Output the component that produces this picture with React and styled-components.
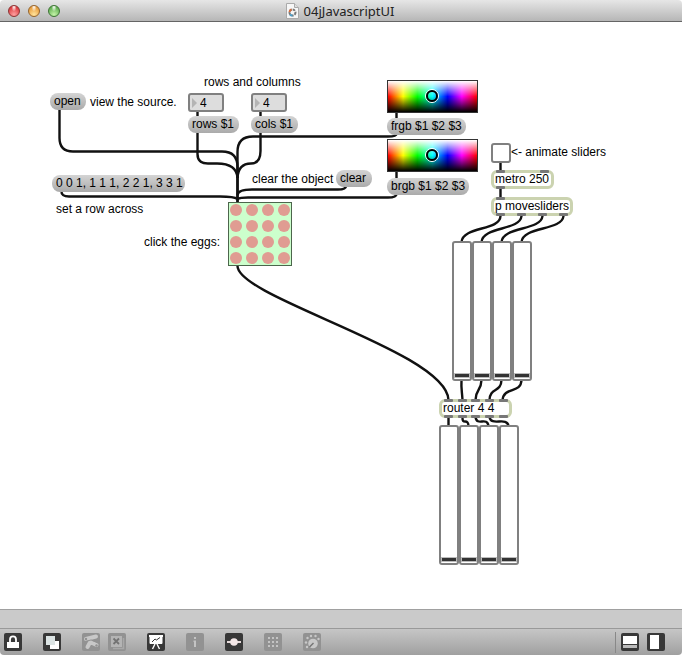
import React, { useState } from "react";
import styled, { createGlobalStyle } from "styled-components";

const Global = createGlobalStyle`
  * { box-sizing: border-box; }
  body { margin: 0; background: #fff; }
  button, input { font: inherit; color: inherit; margin: 0; }
`;

const Window = styled.div`
  display: flex;
  flex-direction: column;
  min-height: 100vh;
  font: 12px/14px "Liberation Sans", Arial, sans-serif;
  color: #000;
`;

const TitleBar = styled.header`
  position: relative;
  display: flex;
  align-items: center;
  justify-content: center;
  height: 22px;
  border-bottom: 1px solid #656565;
  border-radius: 4px 4px 0 0;
  background: linear-gradient(#e6e6e6, #b6b6b6);
`;

const Lights = styled.div`
  position: absolute;
  left: 8px;
  top: 5px;
  display: flex;
  gap: 8px;
`;

const Light = styled.button`
  width: 12px;
  height: 12px;
  padding: 0;
  border: 1px solid ${(p) => p.$edge};
  border-radius: 50%;
  background: radial-gradient(ellipse at 50% 10%, #fffc 0 8%, transparent 36%),
    radial-gradient(circle at 50% 85%, ${(p) => p.$glow}, ${(p) => p.$tone} 75%);
`;

const Title = styled.h1`
  display: flex;
  align-items: center;
  gap: 5px;
  margin: 0;
  padding-right: 2px;
  font: 13px/20px "Noto Sans", sans-serif;
  color: #222;
`;

const Canvas = styled.main`
  position: relative;
  flex: 1;
  min-height: 560px;
  overflow: hidden;
  background: #fff;
`;

const Cords = styled.svg`
  position: absolute;
  left: 0;
  top: 0;
  width: 100%;
  height: 100%;
  fill: none;
  stroke: #111;
  stroke-width: 2.4;
`;

const Node = styled.div`
  position: absolute;
  left: ${(p) => p.$x}px;
  top: ${(p) => p.$y}px;
  display: flex;
  white-space: nowrap;
`;

const Message = styled.button`
  width: ${(p) => p.$w}px;
  height: 17px;
  padding: 0 0 1px 4px;
  border: 0;
  border-radius: 8px;
  text-align: left;
  white-space: nowrap;
  background: linear-gradient(#d4d4d4, #aaa);
`;

const NumberBox = styled.label`
  display: flex;
  align-items: center;
  gap: 3px;
  width: 36px;
  height: 19px;
  padding-left: 2px;
  border: 2px solid #808080;
  border-radius: 3px;
  background: #ddd;
`;

const NumberField = styled.input`
  width: 22px;
  height: 15px;
  padding: 0;
  border: 0;
  outline: 0;
  background: transparent;
`;

const Swatch = styled.button`
  display: flex;
  align-items: center;
  justify-content: center;
  width: 91px;
  height: 33px;
  padding: 0 2px 1px 0;
  border: 1px solid #333;
  background: linear-gradient(#fff, transparent 50%, #000),
    linear-gradient(90deg, #f00, #ff0 17%, #0f0 33%, #0ff 50%, #00f 67%, #f0f 83%, #f00);
`;

const Toggle = styled.input`
  appearance: none;
  width: 20px;
  height: 20px;
  border: 2px solid #808080;
  border-radius: 3px;
  background: #fff;
  &:checked { background: #ccc; }
`;

const ObjectBox = styled.div`
  position: relative;
  width: ${(p) => p.$w}px;
  height: 19px;
  padding-left: 1px;
  border: 3px solid #cbd3b0;
  border-radius: 6px;
  line-height: 13px;
  background: #fff;
`;

const Port = styled.span`
  position: absolute;
  left: ${(p) => p.$x - 3}px;
  ${(p) => (p.$out ? "bottom" : "top")}: -3px;
  width: 9px;
  height: 3px;
  border-radius: 1px;
  background: #777;
`;

const Eggs = styled.div`
  display: grid;
  grid-template-columns: repeat(4, 16px);
  grid-auto-rows: 16px;
  width: 64px;
  height: 64px;
  place-content: center;
  overflow: hidden;
  outline: 1px solid #4c664c;
  outline-offset: -1px;
  background: #cfc;
`;

const Egg = styled.button`
  place-self: center;
  width: 12px;
  height: 12px;
  padding: 0;
  border: 0;
  border-radius: 50%;
  background: ${(p) => (p.$lit ? "#c66" : "#e09c92")};
`;

const Slider = styled.input`
  appearance: none;
  writing-mode: vertical-lr;
  direction: rtl;
  width: 20px;
  height: 140px;
  padding: 2px 1px;
  border: 2px solid #808080;
  border-radius: 3px;
  background: #fff;
  &::-webkit-slider-thumb {
    appearance: none;
    width: 14px;
    height: 3px;
    background: #333;
    box-shadow: 0 0 0 1px #bbb;
  }
`;

const StatusBar = styled.div`
  height: 19px;
  border-top: 1px solid #a0a0a0;
  background: #cacaca;
`;

const ToolBar = styled.footer`
  display: flex;
  align-items: center;
  height: 27px;
  padding: 0 17px 0 4px;
  border-top: 1px solid #999;
  border-radius: 0 0 4px 4px;
  background: linear-gradient(#c6c6c6, #a0a0a0);
`;

const Tools = styled.div`
  display: flex;
  gap: ${(p) => p.$gap}px;
  margin-right: ${(p) => p.$after || 0}px;
`;

const PaneTools = styled.div`
  display: flex;
  align-items: center;
  gap: 8px;
  height: 21px;
  margin-left: auto;
  padding-left: 5px;
  border-left: 1px solid #888;
`;

const Tool = styled.button`
  display: flex;
  width: 18px;
  height: 18px;
  padding: 0;
  border: 0;
  border-radius: 2px;
  color: ${(p) => (p.disabled ? "#c4c4c4" : "#fff")};
  background: ${(p) => (p.disabled ? "#929292" : "#383838")};
`;

const cords = [
  "M59.500 110V138Q59.500 151.500 73 151.500H222Q237.500 151.500 237.500 167V202",
  "M197.500 112V154Q197.500 163.500 208 163.500H217C230 163.500 237 168 237.500 178",
  "M260.500 112V151Q260.500 163.500 251 163.500C243 163.500 238 168 237.500 178",
  "M396.500 113V134Q396.500 136.500 388 136.500H253Q237.500 136.500 237.500 152V202",
  "M346 186Q346 189.500 338 189.500H252Q238 189.500 237.500 195",
  "M61.500 191Q61 196.500 69 196.500H220Q234 196.500 237.500 199",
  "M396.500 172V194Q396.500 197.500 388 197.500H248Q240 197.500 237.500 199",
  "M500.500 163V170M500.500 189V197",
  "M237.500 266C238 298 447 352 448.500 400",
  "M500.500 216C500 231 463 226 461.500 242",
  "M521.500 216C520 231 483 226 481.500 242",
  "M542.500 216C541 231 503 226 501.500 242",
  "M563.500 216C562 231 523 226 521.500 242",
  "M461.500 380C461 389 462 391 462.500 400",
  "M481.500 380C481 392 476 388 475.500 400",
  "M501.500 380C501 393 490 387 489.500 400",
  "M521.500 380C521 394 504 386 502.500 400",
  "M448.500 417V426",
  "M462.500 417C462 426 468 417 468.500 426",
  "M475.500 417C477 427 487 416 488.500 426",
  "M489.500 417C491 427 507 416 508.500 426",
];

const messages = [
  [50, 93, 36, "open"],
  [188, 116, 51, "rows $1"],
  [251, 116, 47, "cols $1"],
  [336, 170, 36, "clear"],
  [52, 175, 133, "0 0 1, 1 1 1, 2 2 1, 3 3 1"],
  [387, 118, 79, "frgb $1 $2 $3"],
  [387, 178, 82, "brgb $1 $2 $3"],
];

const comments = [
  [90, 95, "view the source."],
  [204, 75, "rows and columns"],
  [252, 172, "clear the object"],
  [56, 202, "set a row across"],
  [144, 235, "click the eggs:"],
];

const objects = [
  [491, 170, 63, "metro 250", [5, 49], [5]],
  [491, 197, 82, "p movesliders", [5], [5, 26, 47, 68]],
  [439, 399, 73, "router 4 4", [5, 19, 32, 46, 60], [5, 19, 32, 46, 60]],
];

const icons = {
  Lock: (
    <>
      <path d="M6 9V6.500a3 3.200 0 0 1 6 0V9" fill="none" stroke="currentColor" strokeWidth="1.800" />
      <path d="M3 9h12v6H3z" fill="currentColor" />
    </>
  ),
  "New view": (
    <>
      <path d="M7 8h9v8H7z" fill="#fff" />
      <path d="M3 3h9v9H3z" fill="#dce4e4" />
    </>
  ),
  "Patch cords": (
    <>
      <g stroke="#c8c8c8" strokeWidth="4" strokeLinecap="round">
        <path d="M4 6 14 3.500M9 9.500l5.500 2.500M8.500 8.500 5.500 14" />
      </g>
      <path d="m3 8.500 6-1.500 7 2.500" fill="none" stroke="#929292" strokeWidth="1" />
      <circle cx="4" cy="6" r="1.200" fill="#929292" />
      <circle cx="14.500" cy="12.500" r="1.200" fill="#929292" />
    </>
  ),
  Close: (
    <>
      <path d="M5 15.500h10.500V5" fill="none" stroke="#a8a8a8" strokeWidth="1.500" />
      <path d="M3 3h11v11H3z" fill="#b4b4b4" />
      <path d="m5.500 5.500 5.500 5.500m0-5.500L5.500 11" stroke="#737373" strokeWidth="1.800" />
    </>
  ),
  Presentation: (
    <g fill="none" stroke="currentColor">
      <path d="M2 3h14" strokeWidth="2" />
      <path d="M3 3.500h12v7H3z" fill="#fff" />
      <path d="m5 9 3-3 1.500 1L13 4.500" stroke="#333" />
      <path d="M8 11 5.500 16M10 11l2.500 5" strokeWidth="1.400" />
    </g>
  ),
  Inspector: <path d="M8 4h2v2H8zM7.500 7.500H10V14H8V9h-.5z" fill="currentColor" />,
  Slider: (
    <>
      <path d="M2 9h14" stroke="#e6dada" strokeWidth="2" />
      <circle cx="9" cy="9" r="3.800" fill="#f2e6e6" />
    </>
  ),
  Grid: (
    <g fill="currentColor">
      {[4, 8, 12].flatMap((x) => [4, 8, 12].map((y) => <rect key={x + "-" + y} x={x} y={y} width="2" height="2" />))}
    </g>
  ),
  Dial: (
    <g fill="#c8c8c8">
      <circle cx="10" cy="10.500" r="4.800" />
      {[[4, 14], [3, 9.500], [4.500, 5], [8, 3], [12.500, 3], [15.500, 6]].map(([x, y]) => (
        <circle key={x + "-" + y} cx={x} cy={y} r="1.200" />
      ))}
      <path d="m6.500 14 4-4" stroke="#747474" strokeWidth="1.500" />
    </g>
  ),
  "Bottom pane": (
    <>
      <path d="M2 3h14v8H2z" fill="#fff" />
      <path d="M2 12h14v3H2z" fill="#bbb" />
    </>
  ),
  "Side pane": <path d="M3 2h9v14H3z" fill="#fff" />,
};

function IconTool({ name, disabled }) {
  return (
    <Tool disabled={disabled} aria-label={name}>
      <svg width="18" height="18" viewBox="0 0 18 18">{icons[name]}</svg>
    </Tool>
  );
}

function NumberInput({ x, y, name }) {
  const [value, setValue] = useState("4");
  return (
    <Node $x={x} $y={y}>
      <NumberBox>
        <svg width="5" height="10" viewBox="0 0 5 10"><path d="M0 0 5 5 0 10z" fill="#b4b4b4" /></svg>
        <NumberField aria-label={name} value={value} onChange={(e) => setValue(e.target.value)} />
      </NumberBox>
    </Node>
  );
}

function ColorSwatch({ x, y, name }) {
  return (
    <Node $x={x} $y={y}>
      <Swatch aria-label={name}>
        <svg width="16" height="16" viewBox="0 0 16 16" fill="none">
          <circle cx="8" cy="8" r="6.500" stroke="#fff" strokeWidth="1" />
          <circle cx="8" cy="8" r="5" stroke="#000" strokeWidth="2" />
        </svg>
      </Swatch>
    </Node>
  );
}

function SliderBank({ x, y, name }) {
  return (
    <Node $x={x} $y={y}>
      {[1, 2, 3, 4].map((n) => (
        <Slider key={n} type="range" min="0" max="127" defaultValue="0" aria-label={`${name} ${n}`} />
      ))}
    </Node>
  );
}

function EggGrid() {
  const [lit, setLit] = useState({});
  return (
    <Eggs>
      {Array.from({ length: 16 }, (_, i) => (
        <Egg key={i} $lit={lit[i]} aria-label={`Egg ${i + 1}`} onClick={() => setLit({ ...lit, [i]: !lit[i] })} />
      ))}
    </Eggs>
  );
}

export default function App() {
  return (
    <Window>
      <Global />
      <TitleBar>
        <Lights>
          <Light aria-label="Close window" $edge="#8c3434" $tone="#dc3c40" $glow="#ffa0a0" />
          <Light aria-label="Minimize window" $edge="#94642c" $tone="#e89c3c" $glow="#ffe49c" />
          <Light aria-label="Zoom window" $edge="#3c7434" $tone="#62b052" $glow="#c4f4a8" />
        </Lights>
        <Title>
          <svg width="13" height="16" viewBox="0 0 13 16">
            <path d="M.5.500h8l4 4v11H.5z" fill="#f6f6f6" stroke="#aaa" />
            <path d="M8.500.500v4h4" fill="#ddd" stroke="#aaa" />
            <circle cx="6.500" cy="9.500" r="3" fill="none" stroke="#777" strokeWidth="2" strokeDasharray="2.500 1" />
            <path d="M3.500 9a3 3 0 0 1 2-2.500" fill="none" stroke="#d86c3c" strokeWidth="2" />
            <path d="M4 11.500a3 3 0 0 0 2.500 1" fill="none" stroke="#4c9cc4" strokeWidth="2" />
          </svg>
          04jJavascriptUI
        </Title>
      </TitleBar>
      <PatchCanvas />
      <StatusBar />
      <ToolBar>
        <Tools $gap={21} $after={21}>
          <IconTool name="Lock" />
          <IconTool name="New view" />
        </Tools>
        <Tools $gap={8} $after={21}>
          <IconTool name="Patch cords" disabled />
          <IconTool name="Close" disabled />
        </Tools>
        <Tools $gap={21}>
          <IconTool name="Presentation" />
          <IconTool name="Inspector" disabled />
          <IconTool name="Slider" />
          <IconTool name="Grid" disabled />
          <IconTool name="Dial" disabled />
        </Tools>
        <PaneTools>
          <IconTool name="Bottom pane" />
          <IconTool name="Side pane" />
        </PaneTools>
      </ToolBar>
    </Window>
  );
}

/* Patch coordinates are measured from the top of the window; the title bar takes the first 22px. */
function PatchCanvas() {
  const top = (y) => y - 22;
  return (
    <Canvas>
      <Cords aria-hidden="true">
        <g transform="translate(0 -22)">
          {cords.map((d) => <path key={d} d={d} />)}
        </g>
      </Cords>
      {comments.map(([x, y, text]) => <Node key={text} $x={x} $y={top(y)}>{text}</Node>)}
      {messages.map(([x, y, w, text]) => (
        <Node key={text} $x={x} $y={top(y)}><Message $w={w}>{text}</Message></Node>
      ))}
      <NumberInput x={188} y={top(93)} name="Rows" />
      <NumberInput x={251} y={top(93)} name="Columns" />
      <ColorSwatch x={387} y={top(80)} name="Front color" />
      <ColorSwatch x={387} y={top(139)} name="Back color" />
      <Node $x={491} $y={top(143)}>
        <Toggle type="checkbox" id="animate" />
      </Node>
      <Node $x={511} $y={top(145)}>
        <label htmlFor="animate">{"<- animate sliders"}</label>
      </Node>
      {objects.map(([x, y, w, text, inlets, outlets]) => (
        <Node key={text} $x={x} $y={top(y)}>
          <ObjectBox $w={w}>
            {text}
            {inlets.map((p) => <Port key={"in" + p} $x={p} />)}
            {outlets.map((p) => <Port key={"out" + p} $x={p} $out />)}
          </ObjectBox>
        </Node>
      ))}
      <Node $x={228} $y={top(202)}><EggGrid /></Node>
      <SliderBank x={452} y={top(241)} name="Source level" />
      <SliderBank x={439} y={top(425)} name="Routed level" />
    </Canvas>
  );
}
